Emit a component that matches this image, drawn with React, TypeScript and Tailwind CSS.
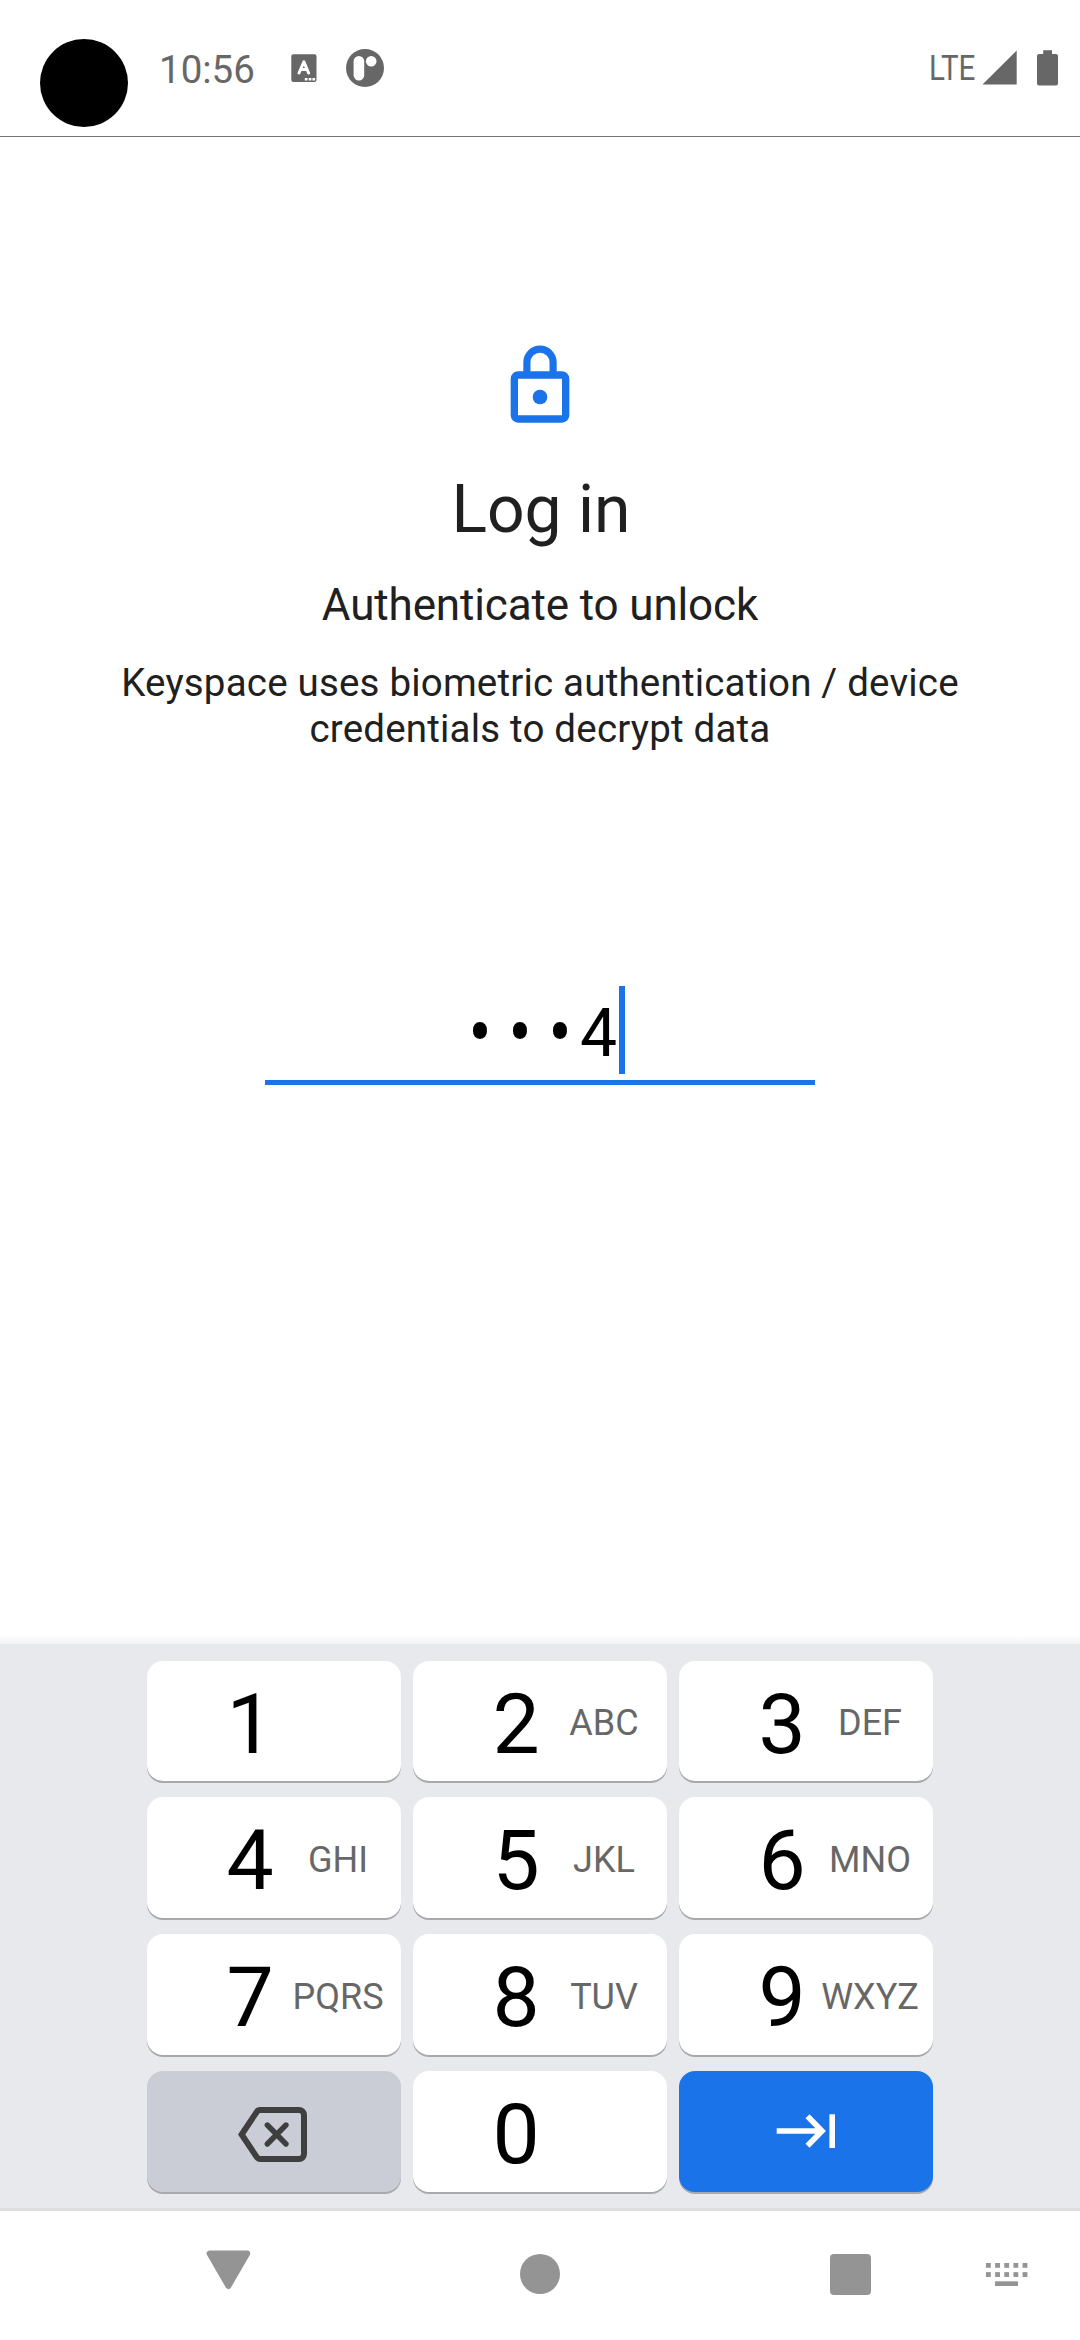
type KeyProps = { digit: string; letters?: string };

const ROWS: KeyProps[][] = [
  [{ digit: "1" }, { digit: "2", letters: "ABC" }, { digit: "3", letters: "DEF" }],
  [{ digit: "4", letters: "GHI" }, { digit: "5", letters: "JKL" }, { digit: "6", letters: "MNO" }],
  [{ digit: "7", letters: "PQRS" }, { digit: "8", letters: "TUV" }, { digit: "9", letters: "WXYZ" }],
];

function Key({ digit, letters }: KeyProps) {
  return (
    <button className="flex h-full w-[254px] items-center rounded-2xl bg-white pl-[78px] shadow-[0_2px_0_#a8a9ad]">
      <span className="w-[50px] pt-[7.5px] text-center text-[84px] leading-[98px] text-black">{digit}</span>
      <span className="flex w-[126px] justify-center pt-[4.5px] text-[36px] leading-[42px] text-[#676767]">
        {letters}
      </span>
    </button>
  );
}

function StatusBar() {
  return (
    <header className="flex h-[137px] shrink-0 items-start border-b border-[#757575] text-[#676767]">
      <div className="mt-[39px] ml-[40px] size-[88px] rounded-full bg-black" />
      <span className="mt-[47px] ml-[31px] w-[96px] text-[38.5px] leading-[46px]">10:56</span>
      <svg className="mt-[54px] ml-[36px]" width="26" height="28" viewBox="0 0 26 28">
        <rect x="0.3" y="0.3" width="25.2" height="27.6" rx="2" fill="#676767" />
        <path d="M8 19 L12.9 7.8 L17.6 19 M9.6 15.4 H16" fill="none" stroke="#fff" strokeWidth="3" strokeLinecap="round" strokeLinejoin="round" />
        <path d="M13.8 24 h2.7 v2.6 h-2.7z M17.7 24 h2.7 v2.6 h-2.7z M21.4 24 h2.7 v2.6 h-2.7z" fill="#fff" />
      </svg>
      <svg className="mt-[49px] ml-[29px]" width="38" height="38" viewBox="0 0 38 38">
        <circle cx="19" cy="19" r="19" fill="#676767" />
        <rect x="7.6" y="7" width="10.6" height="24.5" rx="5.3" fill="#fff" />
        <circle cx="25.2" cy="12.2" r="5.3" fill="#fff" />
      </svg>
      <div className="ml-auto flex w-[151px] items-start">
        <span className="mt-[48px] w-[53px] origin-left scale-x-[0.845] text-[35px] leading-[42px]">LTE</span>
        <svg className="mt-[50px] shrink-0" width="36" height="36" viewBox="0 0 36 36">
          <path d="M0.5 34.5 L34.7 0.6 V34.5Z" fill="#676767" />
        </svg>
        <svg className="mt-[50px] ml-[19px] shrink-0" width="21" height="36" viewBox="0 0 21 36">
          <path d="M6.2 0.3 h8.8 v3.6 h4 a2 2 0 0 1 2 2 v27.5 a2 2 0 0 1 -2 2 h-17 a2 2 0 0 1 -2 -2 v-27.5 a2 2 0 0 1 2 -2 h4.2z" fill="#676767" />
        </svg>
      </div>
    </header>
  );
}

function Bullet() {
  return <span className="w-[40px] scale-x-[1.06] scale-y-[1.2]">•</span>;
}

function LoginPrompt() {
  return (
    <main className="flex h-[1507px] shrink-0 flex-col items-center bg-linear-to-t from-[#f2f2f2] to-white to-[9px] text-center text-[#202020]">
      <svg className="mt-[205px]" width="88" height="88" viewBox="0 0 24 24" fill="#1a73e8">
        <path
          fillRule="evenodd"
          d="M6 8h1.45V5.5a4.55 4.55 0 0 1 9.1 0V8H18a2 2 0 0 1 2 2v10a2 2 0 0 1-2 2H6a2 2 0 0 1-2-2V10a2 2 0 0 1 2-2zM9.4 8h5.2V5.5a2.6 2.6 0 0 0-5.2 0zM6 10v10h12V10z"
        />
        <circle cx="12" cy="15" r="2" />
      </svg>
      <h1 className="mt-[41px] pl-[2px] text-[66px] leading-[78px]">Log in</h1>
      <h2 className="mt-[30px] text-[44px] leading-[52px] tracking-[-0.14px]">Authenticate to unlock</h2>
      <p className="mt-[29px] text-[38.5px] leading-[46px] tracking-[0.19px]">
        Keyspace uses biometric authentication / device
        <br />
        credentials to decrypt data
      </p>
      <div className="mt-[234px] flex h-[99px] w-[550px] justify-center border-b-[5px] border-[#1a73e8] text-black">
        <div className="flex h-[88px] pl-[5px]">
          <div className="flex pt-[9px] text-[66px] leading-[78px]">
            <Bullet />
            <Bullet />
            <Bullet />
            <span className="w-[39px] text-left">4</span>
          </div>
          <div className="h-[88px] w-[6px] bg-[#1a73e8]" />
        </div>
      </div>
    </main>
  );
}

function Keyboard() {
  return (
    <section className="flex h-[567px] shrink-0 flex-col items-center gap-[16px] border-b-[3px] border-[#dfdfdf] bg-[#e8e9ed] pt-[17px]">
      {ROWS.map((row, i) => (
        <div key={i} className="flex h-[121px] gap-[12px] first:h-[120px]">
          {row.map((k) => (
            <Key key={k.digit} {...k} />
          ))}
        </div>
      ))}
      <div className="flex h-[121px] gap-[12px]">
        <button className="flex w-[254px] items-start rounded-2xl bg-[#cbcdd6] pt-[36px] pl-[91px] shadow-[0_2px_0_#a8a9ad]">
          <svg width="70" height="56" viewBox="0 0 70 56" fill="none" stroke="#3f3f3f" strokeWidth="6">
            <path d="M22 3 H61 a5 5 0 0 1 5 5 V47 a5 5 0 0 1 -5 5 H22 Q20 52 18.8 50.2 L3.6 27.5 L18.8 4.8 Q20 3 22 3Z" />
            <path d="M29.3 18 L48 37 M48 18 L29.3 37" strokeWidth="5.4" strokeLinecap="round" />
          </svg>
        </button>
        <Key digit="0" />
        <button className="flex w-[254px] items-start rounded-2xl bg-[#1a73e8] pt-[43px] pl-[97px] shadow-[0_2px_0_#a8a9ad]">
          <svg width="60" height="34" viewBox="0 0 60 34" fill="none" stroke="#fff" strokeWidth="5.6">
            <path d="M0.7 17 H45 M31.5 2.2 L46 17 L31.5 31.8 M56.2 0.2 V34" />
          </svg>
        </button>
      </div>
    </section>
  );
}

function NavBar() {
  return (
    <nav className="flex h-[129px] shrink-0 items-start bg-white">
      <svg className="mt-[39px] ml-[206px]" width="45" height="41" viewBox="0 0 45 41">
        <path d="M3.6 3.6 H41.2 L22.4 36 Z" fill="#949494" stroke="#949494" strokeWidth="6" strokeLinejoin="round" />
      </svg>
      <div className="mt-[43px] ml-[269px] size-[40px] rounded-full bg-[#949494]" />
      <div className="mt-[43px] ml-[270px] size-[41px] rounded-[4px] bg-[#949494]" />
      <svg className="mt-[52px] ml-[115px]" width="43" height="24" viewBox="0 0 43 24" fill="#949494">
        {[0, 1, 2, 3, 4].map((c) =>
          [0, 1].map((r) => <rect key={`${c}-${r}`} x={c * 9.15} y={r * 9.15} width="4.8" height="4.8" />)
        )}
        <rect x="9" y="18.3" width="23" height="4.7" />
      </svg>
    </nav>
  );
}

export default function App() {
  return (
    <div className="flex h-[2340px] w-[1080px] flex-col overflow-hidden bg-white font-[Roboto,sans-serif]">
      <StatusBar />
      <LoginPrompt />
      <Keyboard />
      <NavBar />
    </div>
  );
}
